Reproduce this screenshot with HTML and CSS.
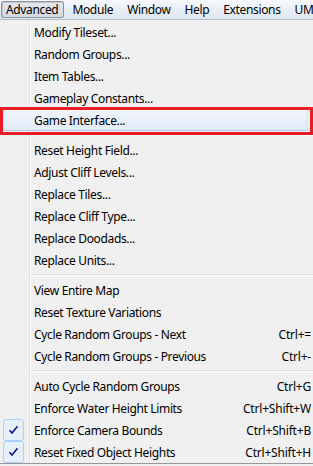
FILE: index.html
```html
<!DOCTYPE html>
<html>
<head>
<meta charset="utf-8">
<link rel="stylesheet" href="styles.css">
</head>
<body>
<div class="menubar">
  <span class="mb-item pressed">Advanced</span>
  <span class="mb-item">Module</span>
  <span class="mb-item">Window</span>
  <span class="mb-item">Help</span>
  <span class="mb-item">Extensions</span>
  <span class="mb-item">UM</span>
</div>
<div class="menu">
  <div class="item"><span class="label">Modify Tileset...</span></div>
  <div class="item"><span class="label">Random Groups...</span></div>
  <div class="item"><span class="label">Item Tables...</span></div>
  <div class="item"><span class="label">Gameplay Constants...</span></div>
  <div class="item hot"><span class="label">Game Interface...</span><span class="callout"></span></div>
  <div class="sep"></div>
  <div class="item"><span class="label">Reset Height Field...</span></div>
  <div class="item"><span class="label">Adjust Cliff Levels...</span></div>
  <div class="item"><span class="label">Replace Tiles...</span></div>
  <div class="item"><span class="label">Replace Cliff Type...</span></div>
  <div class="item"><span class="label">Replace Doodads...</span></div>
  <div class="item"><span class="label">Replace Units...</span></div>
  <div class="sep"></div>
  <div class="item"><span class="label">View Entire Map</span></div>
  <div class="item"><span class="label">Reset Texture Variations</span></div>
  <div class="item"><span class="label">Cycle Random Groups - Next</span><span class="key">Ctrl+=</span></div>
  <div class="item"><span class="label">Cycle Random Groups - Previous</span><span class="key">Ctrl+-</span></div>
  <div class="sep"></div>
  <div class="item"><span class="label">Auto Cycle Random Groups</span><span class="key">Ctrl+G</span></div>
  <div class="item"><span class="label">Enforce Water Height Limits</span><span class="key">Ctrl+Shift+W</span></div>
  <div class="item checked"><span class="check"><svg width="11" height="10" viewBox="0 0 11 10"><path d="M1.5 5.2 L4 8 L9.5 1.2" fill="none" stroke="#0b1a8a" stroke-width="1.6"/></svg></span><span class="label">Enforce Camera Bounds</span><span class="key">Ctrl+Shift+B</span></div>
  <div class="item checked"><span class="check"><svg width="11" height="10" viewBox="0 0 11 10"><path d="M1.5 5.2 L4 8 L9.5 1.2" fill="none" stroke="#0b1a8a" stroke-width="1.6"/></svg></span><span class="label">Reset Fixed Object Heights</span><span class="key">Ctrl+Shift+H</span></div>
</div>
</body>
</html>
```

FILE: styles.css
```css
html, body {
  margin: 0;
  padding: 0;
  background: #f0f0f0;
}
body {
  font-family: "Noto Sans", "Open Sans", sans-serif;
  font-size: 12px;
  letter-spacing: -0.35px;
  color: #000;
  width: 313px;
  height: 466px;
  overflow: hidden;
}
.menubar {
  height: 19px;
  display: flex;
  align-items: center;
  background: linear-gradient(#f6f8fc, #dde6f2);
  border-bottom: 1px solid #b6bcc6;
  padding-left: 1px;
  white-space: nowrap;
  overflow: hidden;
}
.mb-item {
  padding: 0 5px 0 4px;
  margin-right: 3px;
  line-height: 15px;
  border: 1px solid transparent;
  border-radius: 2px;
  flex-shrink: 0;
}
.pressed {
  border-color: #8d939c;
  background: linear-gradient(#e4e7eb, #d5dae0);
  box-shadow: inset 1px 1px 0 #c4c9d0;
}
.menu {
  display: flex;
  flex-direction: column;
  padding-top: 1px;
  height: 442px;
  border-bottom: 1px solid #979797;
  background: linear-gradient(to right, transparent 29px, #e2e3e3 29px 30px, #ffffff 30px 31px, transparent 31px);
}
.item {
  height: 22px;
  display: flex;
  align-items: center;
  padding-left: 34px;
  padding-right: 2px;
  position: relative;
}
.label {
  flex: 1;
  white-space: nowrap;
}
.key {
  white-space: nowrap;
  letter-spacing: -0.2px;
}
.hot {
  margin: 0 5px 0 3px;
  padding-left: 31px;
  border-radius: 3px;
  background: linear-gradient(#f1f5fc, #e1eaf7);
  box-shadow: inset 0 -1px 0 #a9c6ed, inset 0 0 0 1px #d9e5f6;
}
.callout {
  position: absolute;
  top: -2px;
  bottom: -4px;
  left: -3px;
  right: -5px;
  border: 3px solid #e81d25;
  pointer-events: none;
}
.sep {
  height: 8px;
  margin-left: 30px;
  background: linear-gradient(transparent 3px, #e0e0e0 3px 4px, #ffffff 4px 5px, transparent 5px);
}
.check {
  position: absolute;
  left: 3px;
  top: 0;
  width: 19px;
  height: 20px;
  border: 1px solid #aecff7;
  border-radius: 3px;
  background: #e6effa;
  display: flex;
  align-items: center;
  justify-content: center;
}
```
